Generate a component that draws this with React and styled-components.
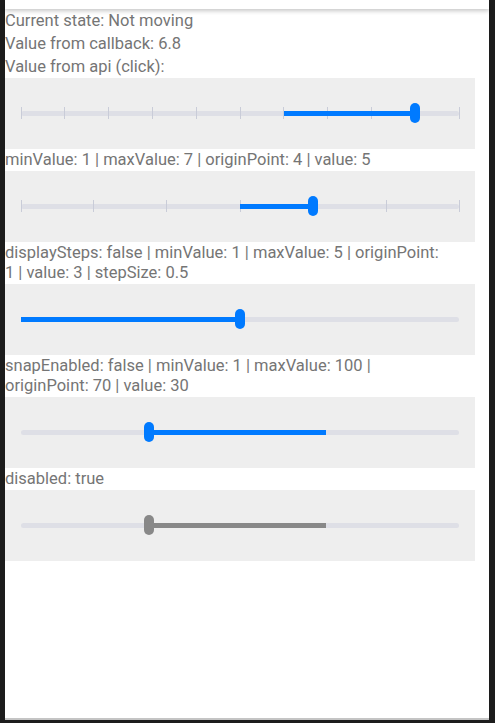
import React from 'react';
import styled, { createGlobalStyle } from 'styled-components';

const GlobalStyle = createGlobalStyle`
  html, body {
    margin: 0;
    padding: 0;
    background: #000000;
  }
  body {
    font-family: Roboto, "Liberation Sans", sans-serif;
  }
`;

const Frame = styled.div`
  display: flex;
  width: 495px;
  height: 723px;
  background: #1c1c1c;
  overflow: hidden;
`;

const Screen = styled.div`
  display: flex;
  flex-direction: column;
  margin-left: 5px;
  width: 484px;
  height: 718px;
  background: #ffffff;
  border-bottom: 2px solid #c4c4c4;
`;

const TopBar = styled.div`
  height: 9px;
  background: #ffffff;
  box-shadow: 0 2px 4px rgba(0, 0, 0, 0.22);
  flex-shrink: 0;
`;

const Content = styled.div`
  width: 470px;
  display: flex;
  flex-direction: column;
`;

const Info = styled.div`
  font-size: 16.5px;
  line-height: 23px;
  color: #757575;
`;

const Label = styled.div`
  font-size: 16.5px;
  line-height: 20px;
  color: #757575;
  padding: 1px 0 1px;
  white-space: pre-line;
`;

const Panel = styled.div`
  height: 71px;
  background: #eeeeee;
  display: flex;
  align-items: center;
  padding: 0 16px;
`;

const Track = styled.div`
  position: relative;
  flex: 1;
  height: 5px;
  border-radius: 3px;
  background: #dedfe6;
`;

const Tick = styled.div`
  position: absolute;
  top: -4px;
  width: 1px;
  height: 12px;
  margin-left: -0.5px;
  background: #c9ccd8;
`;

const Fill = styled.div`
  position: absolute;
  top: 0;
  height: 5px;
  background: ${p => (p.disabled ? '#888888' : '#007aff')};
`;

const Thumb = styled.div`
  position: absolute;
  top: -8px;
  width: 10px;
  height: 20px;
  margin-left: -5px;
  border-radius: 5px;
  background: ${p => (p.disabled ? '#888888' : '#007aff')};
`;

const Slider = ({ min, max, origin, value, ticks, disabled }) => {
  const pct = v => ((v - min) / (max - min)) * 100;
  const a = pct(Math.min(origin, value));
  const b = pct(Math.max(origin, value));
  const tickList = [];
  if (ticks) {
    for (let v = min; v <= max; v += 1) tickList.push(v);
  }
  return (
    <Panel>
      <Track>
        {tickList.map(v => (
          <Tick key={v} style={{ left: `${pct(v)}%` }} />
        ))}
        <Fill disabled={disabled} style={{ left: `${a}%`, width: `${b - a}%` }} />
        <Thumb disabled={disabled} style={{ left: `${pct(value)}%` }} />
      </Track>
    </Panel>
  );
};

export default function App() {
  return (
    <Frame>
      <GlobalStyle />
      <Screen>
        <TopBar />
        <Content>
          <Info>Current state: Not moving</Info>
          <Info>Value from callback: 6.8</Info>
          <Info>Value from api (click):</Info>
          <Slider min={0} max={10} origin={6} value={9} ticks />
          <Label>minValue: 1 | maxValue: 7 | originPoint: 4 | value: 5</Label>
          <Slider min={1} max={7} origin={4} value={5} ticks />
          <Label>{'displaySteps: false | minValue: 1 | maxValue: 5 | originPoint:\n1 | value: 3 | stepSize: 0.5'}</Label>
          <Slider min={1} max={5} origin={1} value={3} />
          <Label>{'snapEnabled: false | minValue: 1 | maxValue: 100 |\noriginPoint: 70 | value: 30'}</Label>
          <Slider min={1} max={100} origin={70} value={30} />
          <Label>disabled: true</Label>
          <Slider min={1} max={100} origin={70} value={30} disabled />
        </Content>
      </Screen>
    </Frame>
  );
}
